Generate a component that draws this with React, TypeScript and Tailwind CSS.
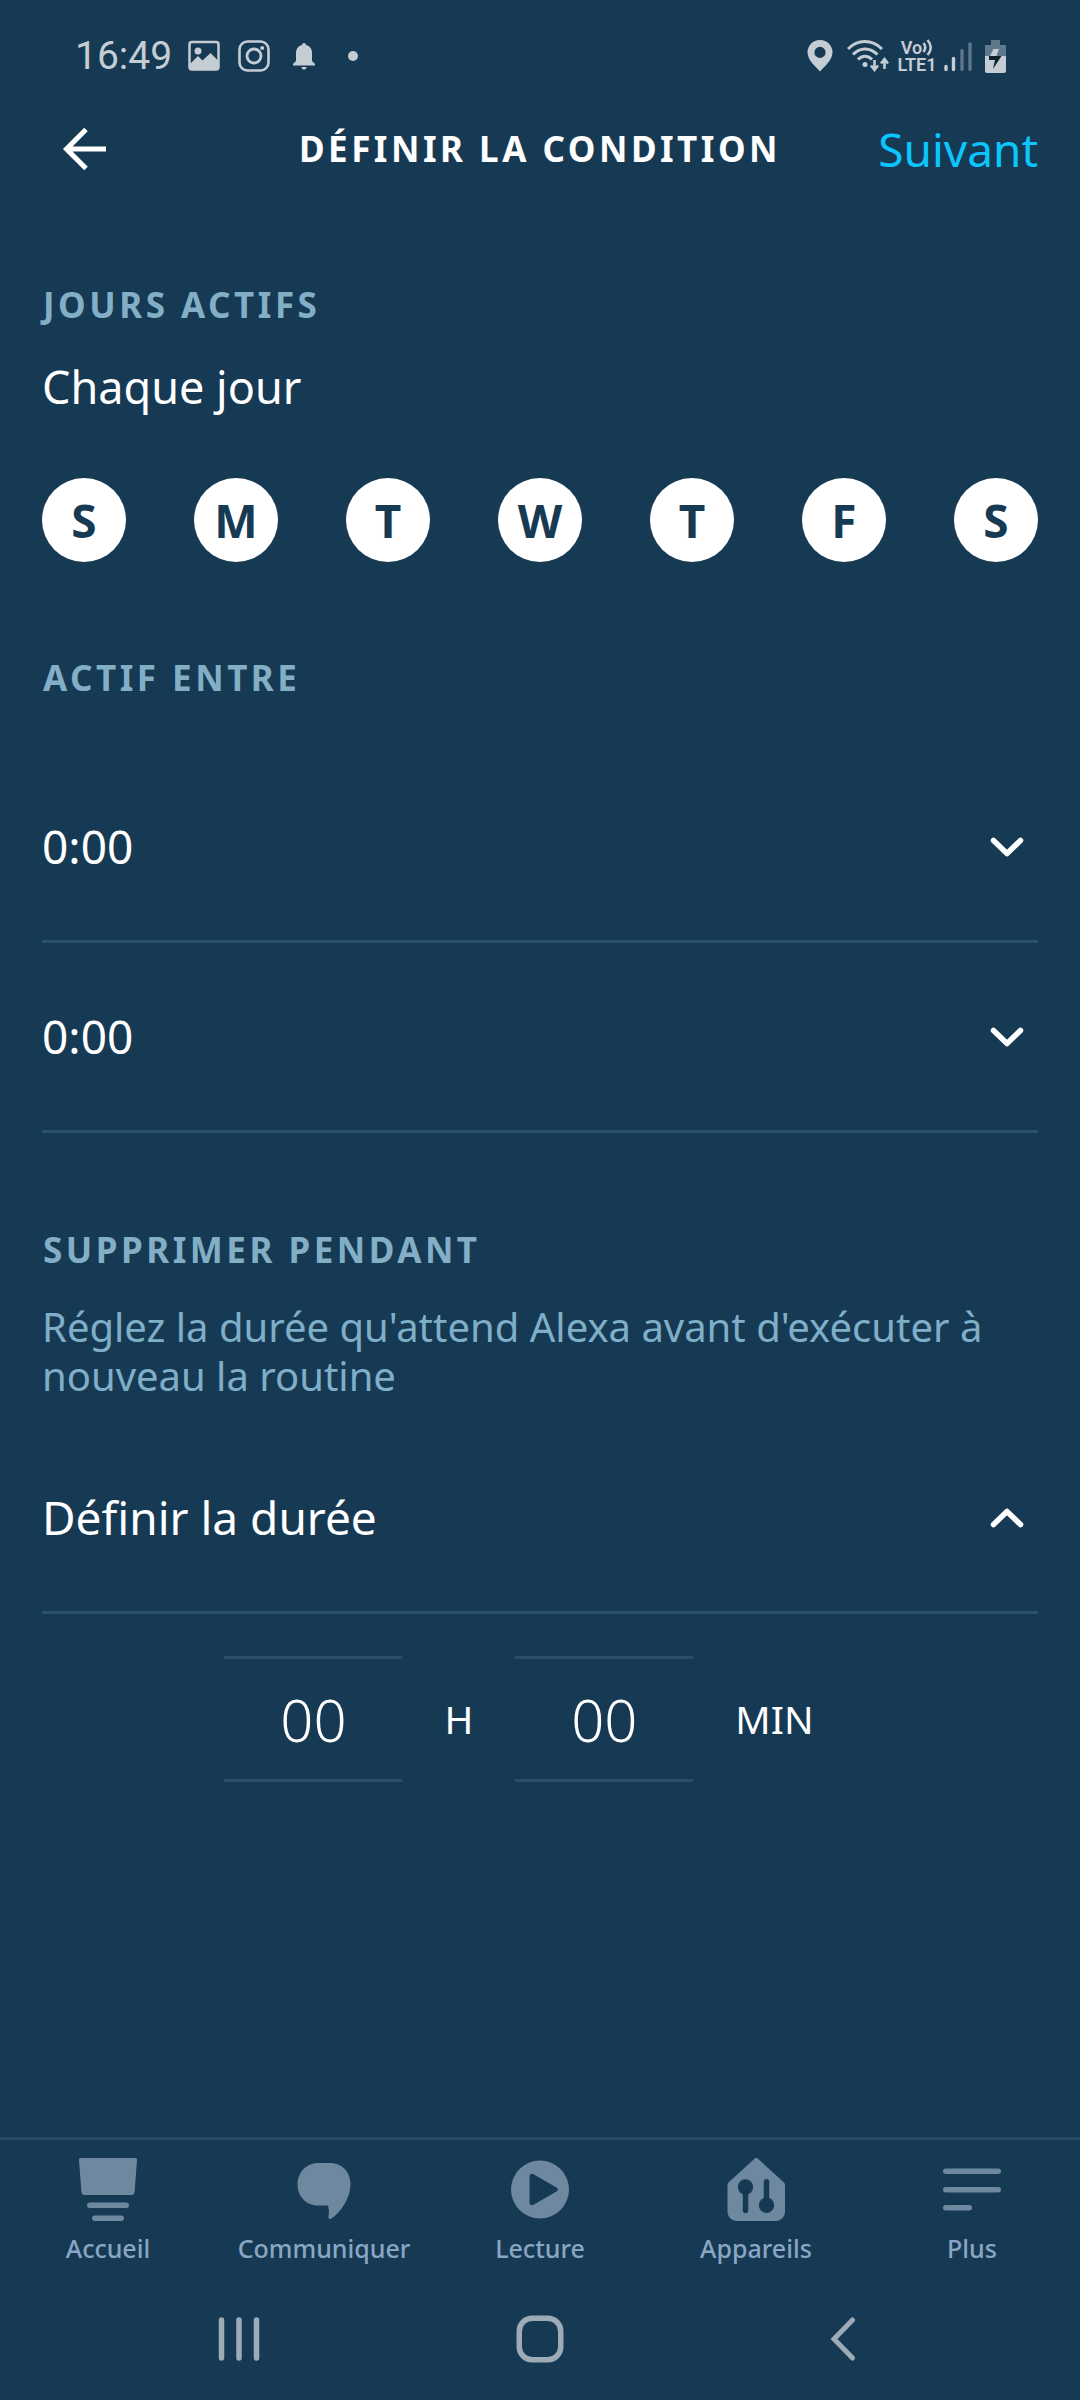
import { useState } from "react"
import type { ReactNode } from "react"

const days = [
    { id: 0, letter: "S" },
    { id: 1, letter: "M" },
    { id: 2, letter: "T" },
    { id: 3, letter: "W" },
    { id: 4, letter: "T" },
    { id: 5, letter: "F" },
    { id: 6, letter: "S" },
]

const StatusBar = () => (
    <div className="h-[112px] pl-[75px] pr-[74px] flex items-center justify-between text-[#c5cdd4] font-[Roboto,sans-serif]">
        <div className="flex items-center">
            <span className="text-[39px] leading-[48px]">16:49</span>
            <svg className="ml-4 w-8 h-8" viewBox="0 0 32 32" fill="none">
                <rect x="1.5" y="2" width="29" height="27.5" rx="2.5" stroke="currentColor" strokeWidth="2.5" />
                <circle cx="10" cy="11" r="3.5" fill="currentColor" />
                <path d="M2 24 L10 16 L14.500 20.500 L22.500 13 L30.500 21 V29.500 H2 Z" fill="currentColor" />
            </svg>
            <svg className="ml-[18px] w-8 h-8" viewBox="0 0 32 32" fill="none" stroke="currentColor">
                <rect x="1.500" y="1.500" width="29" height="29" rx="8" strokeWidth="2.600" />
                <circle cx="16" cy="16" r="7" strokeWidth="2.800" />
                <circle cx="24.200" cy="8" r="2" fill="currentColor" stroke="none" />
            </svg>
            <svg className="ml-[22px] w-6 h-8" viewBox="0 0 24 32" fill="currentColor">
                <path d="M12 3 a2 2 0 0 1 2 2 C18 6 20 9 20 13 V21 L23 24 V25.500 H1 V24 L4 21 V13 C4 9 6 6 10 5 a2 2 0 0 1 2-2 Z" />
                <path d="M9.500 27 H14.500 a2.500 2.500 0 0 1 -5 0 Z" />
            </svg>
            <span className="ml-8 w-[10px] h-[10px] rounded-full bg-[#c5cdd4]" />
        </div>
        <div className="flex items-center">
            <svg className="w-[26px] h-8" viewBox="0 0 26 32" fill="currentColor">
                <path fillRule="evenodd" d="M13 0 C6 0 .5 5.500 .5 12.300 C.5 20 8 26 13 31.500 C18 26 25.500 20 25.500 12.300 C25.500 5.500 20 0 13 0 Z M13 6.800 a5.600 5.600 0 1 1 0 11.200 a5.600 5.600 0 1 1 0 -11.200 Z" />
            </svg>
            <svg className="ml-[14px] w-[42px] h-[33px]" viewBox="0 0 42 33" fill="none" stroke="currentColor" strokeWidth="3">
                <path d="M1 9 C10.500 -1 25 -1 35 9" />
                <path d="M6 14.500 C13 7 23 7 30.500 14.500" />
                <path d="M11 19.500 C15 15 21 15 25 19.500" />
                <circle cx="18" cy="24.500" r="2.500" fill="currentColor" stroke="none" />
                <path d="M27.500 20 V29 M24 25.500 L27.500 30 L31 25.500" strokeWidth="2.600" />
                <path d="M37.500 29 V20 M34 23.500 L37.500 19 L41 23.500" strokeWidth="2.600" />
            </svg>
            <div className="ml-2 w-[40px] flex flex-col items-center font-semibold text-[18px] leading-[17px]">
                <div className="flex items-center">
                    <span>Vo</span>
                    <svg className="w-[11px] h-[17px]" viewBox="0 0 11 17" fill="none" stroke="currentColor" strokeWidth="2.500">
                        <path d="M1.500 4 Q5 8.500 1.500 13 M5.500 1 Q12 8.500 5.500 16" />
                    </svg>
                </div>
                <span>LTE1</span>
            </div>
            <svg className="ml-[7px] w-7 h-8" viewBox="0 0 28 32" stroke="currentColor" strokeWidth="3.400" strokeLinecap="round">
                <path d="M2 26.500 V29.500 M9.500 18.500 V29.500" />
                <path d="M18 10.500 V29.500 M26 4 V29.500" opacity=".4" />
            </svg>
            <svg className="ml-[13px] w-[21px] h-[33px]" viewBox="0 0 21 33">
                <path d="M6 0 H15 V5 H21 V17 H0 V5 H6 Z" fill="#5f788c" />
                <path d="M0 16 H21 V31 a2 2 0 0 1 -2 2 H2 a2 2 0 0 1 -2 -2 Z" fill="#c5cdd4" />
                <path d="M8.500 9 H14 L11.500 16 H5 Z" fill="#c5cdd4" />
                <path d="M4 16 H16.500 L8 29 L10 20 H4 Z" fill="#10222e" />
            </svg>
        </div>
    </div>
)

const Chevron = ({ up = false }: { up?: boolean }) => (
    <svg className="w-[34px] h-5" viewBox="0 0 34 20" fill="none" stroke="white" strokeWidth="5.500" strokeLinecap="round" strokeLinejoin="round">
        <path d={up ? "M3.500 16.500 L17 3.500 L30.500 16.500" : "M3.500 3.500 L17 16.500 L30.500 3.500"} />
    </svg>
)

const SectionTitle = ({ children }: { children: ReactNode }) => (
    <h2 className="pl-px text-[35px] leading-10 font-bold tracking-widest text-[#82afc6]">{children}</h2>
)

const Row = ({ label, open, onClick }: {
    label: string,
    open?: boolean,
    onClick?: () => void
}) => (
    <button
        type="button"
        aria-expanded={!!open}
        onClick={onClick}
        className="w-full h-[190px] pr-[14px] flex items-center justify-between border-b-3 border-[#28506f] text-[46px] text-left"
    >
        <span>{label}</span>
        <Chevron up={open} />
    </button>
)

const DurationField = ({ id, unit }: { id: string, unit: string }) => {
    const [value, setValue] = useState("00")
    return (
        <div className="flex items-center">
            <input
                id={id}
                inputMode="numeric"
                maxLength={2}
                value={value}
                onChange={(e) => setValue(e.target.value)}
                className="w-[178px] h-[126px] border-y-3 border-[#2d4d68] bg-transparent text-center text-[58px] font-light outline-none"
            />
            <label htmlFor={id} className="mx-[42px] text-[39px]">{unit}</label>
        </div>
    )
}

const tabs: { label: string, icon: ReactNode }[] = [
    {
        label: "Accueil",
        icon: <>
            <path d="M5 0 H59 a2 2 0 0 1 2 2.500 L58.500 34.500 a3 3 0 0 1 -3 2.500 H8.500 a3 3 0 0 1 -3 -2.500 L3 2.500 a2 2 0 0 1 2 -2.500 Z" />
            <rect x="11" y="44.500" width="42" height="5.500" rx="2.750" />
            <rect x="16" y="57.500" width="32" height="5.500" rx="2.750" />
        </>,
    },
    {
        label: "Communiquer",
        icon: <path d="M26 5 H38 C50 5 58.500 14 58.500 26 C58.500 40 49 54 39.500 60.500 C37.500 61.500 36 60.500 36.500 58.500 C37.200 54.500 37 51 36 47.500 H26 C14 47.500 5.500 38 5.500 26.500 C5.500 14.500 14.500 5 26 5 Z" />,
    },
    {
        label: "Lecture",
        icon: <path fillRule="evenodd" d="M32 2.500 a29 29 0 1 1 0 58 a29 29 0 1 1 0 -58 Z M21.500 19 V44 C21.500 47 23.500 48 26 46.500 L48.500 33.500 C50.500 32.300 50.500 30.700 48.500 29.500 L26 16.500 C23.500 15 21.500 16 21.500 19 Z" />,
    },
    {
        label: "Appareils",
        icon: <>
            <path d="M30.500 .8 a2.500 2.500 0 0 1 3.500 0 L60 24.500 a4 4 0 0 1 1 2.500 V54 a9 9 0 0 1 -9 9 H12.500 a9 9 0 0 1 -9 -9 V27 a4 4 0 0 1 1 -2.500 Z" />
            <g fill="#173a54" stroke="#173a54" strokeLinecap="round">
                <circle cx="21.500" cy="29" r="7.700" stroke="none" />
                <path d="M21.500 29 V52.500" strokeWidth="5.500" />
                <circle cx="42.500" cy="47.300" r="7.700" stroke="none" />
                <path d="M42.500 47 V23.700" strokeWidth="5.500" />
            </g>
        </>,
    },
    {
        label: "Plus",
        icon: <>
            <rect x="3" y="10.500" width="58" height="5.500" rx="2.750" />
            <rect x="3" y="29" width="58" height="5.500" rx="2.750" />
            <rect x="3" y="47" width="29" height="5.500" rx="2.750" />
        </>,
    },
]

const App = () => {
    const [active, setActive] = useState<number[]>(days.map((d) => d.id))
    const [showDuration, setShowDuration] = useState(true)

    const toggleDay = (id: number) => {
        setActive(active.includes(id) ? active.filter((d) => d !== id) : [...active, id])
    }

    return (
        <div className="min-h-screen flex flex-col bg-[#173a54] text-white font-['Noto_Sans',sans-serif]">
            <StatusBar />
            <header className="h-[74px] px-[42px] grid grid-cols-[1fr_auto_1fr] items-center">
                <button type="button" aria-label="Retour" className="justify-self-start pl-5">
                    <svg className="w-11 h-11" viewBox="0 0 44 44" fill="none" stroke="white" strokeWidth="5">
                        <path d="M24 2.500 L4.500 22 L24 41.500 M5 22 H44" />
                    </svg>
                </button>
                <h1 className="text-[35px] leading-10 font-bold tracking-widest">DÉFINIR LA CONDITION</h1>
                <button type="button" className="justify-self-end text-[46px] text-[#0bc5fd]">Suivant</button>
            </header>

            <main className="grow px-[42px] pt-[99px]">
                <section>
                    <SectionTitle>JOURS ACTIFS</SectionTitle>
                    <p className="mt-8 text-[45px] leading-[60px]">Chaque jour</p>
                    <div className="mt-[61px] flex justify-between">
                        {days.map((day) => (
                            <button
                                key={day.id}
                                type="button"
                                aria-pressed={active.includes(day.id)}
                                onClick={() => toggleDay(day.id)}
                                className="size-[84px] rounded-full flex items-center justify-center bg-white text-[#173a54] text-[46px] font-bold aria-[pressed=false]:bg-transparent aria-[pressed=false]:text-white"
                            >
                                {day.letter}
                            </button>
                        ))}
                    </div>
                </section>

                <section className="mt-24">
                    <SectionTitle>ACTIF ENTRE</SectionTitle>
                    <div className="mt-[55px]">
                        <Row label="0:00" />
                        <Row label="0:00" />
                    </div>
                </section>

                <section className="mt-[97px]">
                    <SectionTitle>SUPPRIMER PENDANT</SectionTitle>
                    <p className="mt-8 mb-6 text-[40px] leading-[49px] text-[#7fafc8]">
                        Réglez la durée qu'attend Alexa avant d'exécuter à nouveau la routine
                    </p>
                    <Row label="Définir la durée" open={showDuration} onClick={() => setShowDuration(!showDuration)} />
                    {showDuration && (
                        <div className="mt-[42px] flex justify-center">
                            <DurationField id="hours" unit="H" />
                            <DurationField id="minutes" unit="MIN" />
                        </div>
                    )}
                </section>
            </main>

            <nav className="grid grid-cols-5 border-t-3 border-[#2b4b64]">
                {tabs.map((tab) => (
                    <a key={tab.label} href="#" className="pt-[18px] pb-[14px] flex flex-col items-center gap-[10px]">
                        <svg className="size-16 text-[#6e88a0]" viewBox="0 0 64 64" fill="currentColor">
                            {tab.icon}
                        </svg>
                        <span className="text-[25px] leading-8 font-medium text-[#8aa6c4]">{tab.label}</span>
                    </a>
                ))}
            </nav>

            <div className="h-[122px] px-[88px] grid grid-cols-3 items-center justify-items-center text-[#9cabb5]">
                <button type="button" aria-label="Applications récentes">
                    <svg className="w-12 h-12" viewBox="0 0 48 48" fill="none" stroke="currentColor" strokeWidth="5.500" strokeLinecap="round">
                        <path d="M6.500 5 V43 M24 5 V43 M41.500 5 V43" />
                    </svg>
                </button>
                <button type="button" aria-label="Accueil">
                    <svg className="w-12 h-12" viewBox="0 0 48 48" fill="none" stroke="currentColor" strokeWidth="5.500">
                        <rect x="3.250" y="3.250" width="41.500" height="41.500" rx="13" />
                    </svg>
                </button>
                <button type="button" aria-label="Précédent">
                    <svg className="w-12 h-12" viewBox="0 0 48 48" fill="none" stroke="currentColor" strokeWidth="5" strokeLinecap="round">
                        <path d="M35.500 5 L17 24 L35.500 43" />
                    </svg>
                </button>
            </div>
        </div>
    )
}

export default App
